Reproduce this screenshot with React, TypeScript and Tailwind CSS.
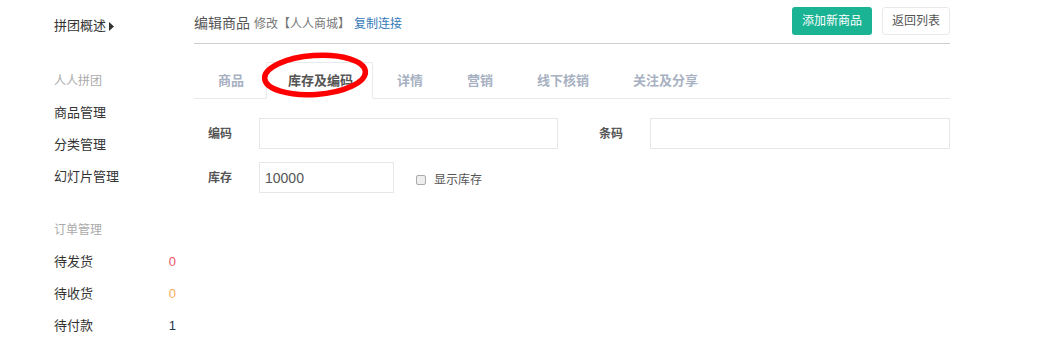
import React from "react";

const font = { fontFamily: '"Liberation Sans", "Noto Sans CJK SC", sans-serif' };

function SideLink({ label, count, color }: { label: string; count?: string; color?: string }) {
  return (
    <div className="flex items-center justify-between h-[32px] text-[13px] text-[#333]">
      <span>{label}</span>
      {count && <span className={`text-[13px] ${color}`}>{count}</span>}
    </div>
  );
}

const tabs = ["商品", "库存及编码", "详情", "营销", "线下核销", "关注及分享"];

export default function App() {
  return (
    <div className="flex w-[1040px] h-[349px] bg-white overflow-hidden" style={font}>
      <aside className="w-[194px] shrink-0 pl-[54px] pr-[18px] pt-[10px]">
        <div className="flex items-center h-[32px] text-[13px] text-[#333]">
          拼团概述
          <svg className="ml-[3px]" width="5" height="9" viewBox="0 0 5 9">
            <path d="M0 0 L5 4.5 L0 9 Z" fill="#333" />
          </svg>
        </div>
        <div className="mt-[22px] h-[33px] flex items-center text-[12px] text-[#aaa]">人人拼团</div>
        <SideLink label="商品管理" />
        <SideLink label="分类管理" />
        <SideLink label="幻灯片管理" />
        <div className="mt-[20px] h-[33px] flex items-center text-[12px] text-[#aaa]">订单管理</div>
        <SideLink label="待发货" count="0" color="text-[#ed5565]" />
        <SideLink label="待收货" count="0" color="text-[#f8ac59]" />
        <SideLink label="待付款" count="1" color="text-[#1f3550]" />
      </aside>

      <main className="w-[756px] shrink-0 relative">
        <div className="flex items-center justify-between h-[44px] border-b border-[#d0d0d0]">
          <div className="flex items-baseline gap-[4px] pt-[4px]">
            <span className="text-[14px] text-[#555]">编辑商品</span>
            <span className="text-[12px] text-[#777]">修改【人人商城】</span>
            <span className="text-[12px] text-[#337ab7]">复制连接</span>
          </div>
          <div className="flex items-center gap-[10px] pb-[2px]">
            <button className="h-[28px] px-[10px] rounded-[3px] bg-[#1ab394] text-white text-[12px]">添加新商品</button>
            <button className="h-[28px] px-[9px] rounded-[3px] bg-white border border-[#e7eaec] text-[#555] text-[12px]">返回列表</button>
          </div>
        </div>

        <div className="mt-[18px] flex pl-[2px] border-b border-[#e7eaec]">
          {tabs.map((t, i) => (
            <div
              key={t}
              className={
                i === 1
                  ? "h-[37px] -mb-px mr-[2px] flex items-center pl-[21px] pr-[19px] text-[13px] font-bold text-[#555] bg-white border border-[#e7eaec] border-b-white rounded-t-[2px]"
                  : "h-[37px] -mb-px mr-[2px] flex items-center pl-[21px] pr-[19px] text-[13px] font-bold text-[#a7b1c2] border border-transparent"
              }
            >
              {t}
            </div>
          ))}
        </div>

        <div className="pt-[19px] text-[12px]">
          <div className="flex items-center">
            <label className="w-[65px] pl-[14px] font-bold text-[#555]">编码</label>
            <input className="w-[299px] h-[31px] border border-[#e5e6e7] outline-none" />
            <label className="w-[92px] pl-[41px] font-bold text-[#555]">条码</label>
            <input className="w-[300px] h-[31px] border border-[#e5e6e7] outline-none" />
          </div>
          <div className="flex items-center mt-[13px]">
            <label className="w-[65px] pl-[14px] font-bold text-[#555]">库存</label>
            <input
              defaultValue="10000"
              className="w-[135px] h-[31px] border border-[#e5e6e7] outline-none px-[5px] text-[14px] text-[#555]"
              style={font}
            />
            <label className="flex items-center ml-[22px] mt-[4px] text-[12px] text-[#555]">
              <span className="w-[10px] h-[10px] rounded-[2px] border border-[#aaa] bg-[#eee]" />
              <span className="ml-[8px]">显示库存</span>
            </label>
          </div>
        </div>

        <svg className="absolute left-[66px] top-[51px] pointer-events-none" width="112" height="48" viewBox="0 0 112 48">
          <ellipse cx="55" cy="24" rx="50.5" ry="19.5" fill="none" stroke="#ff0000" strokeWidth="5.5" transform="rotate(-4 55 24)" />
        </svg>
      </main>
    </div>
  );
}
